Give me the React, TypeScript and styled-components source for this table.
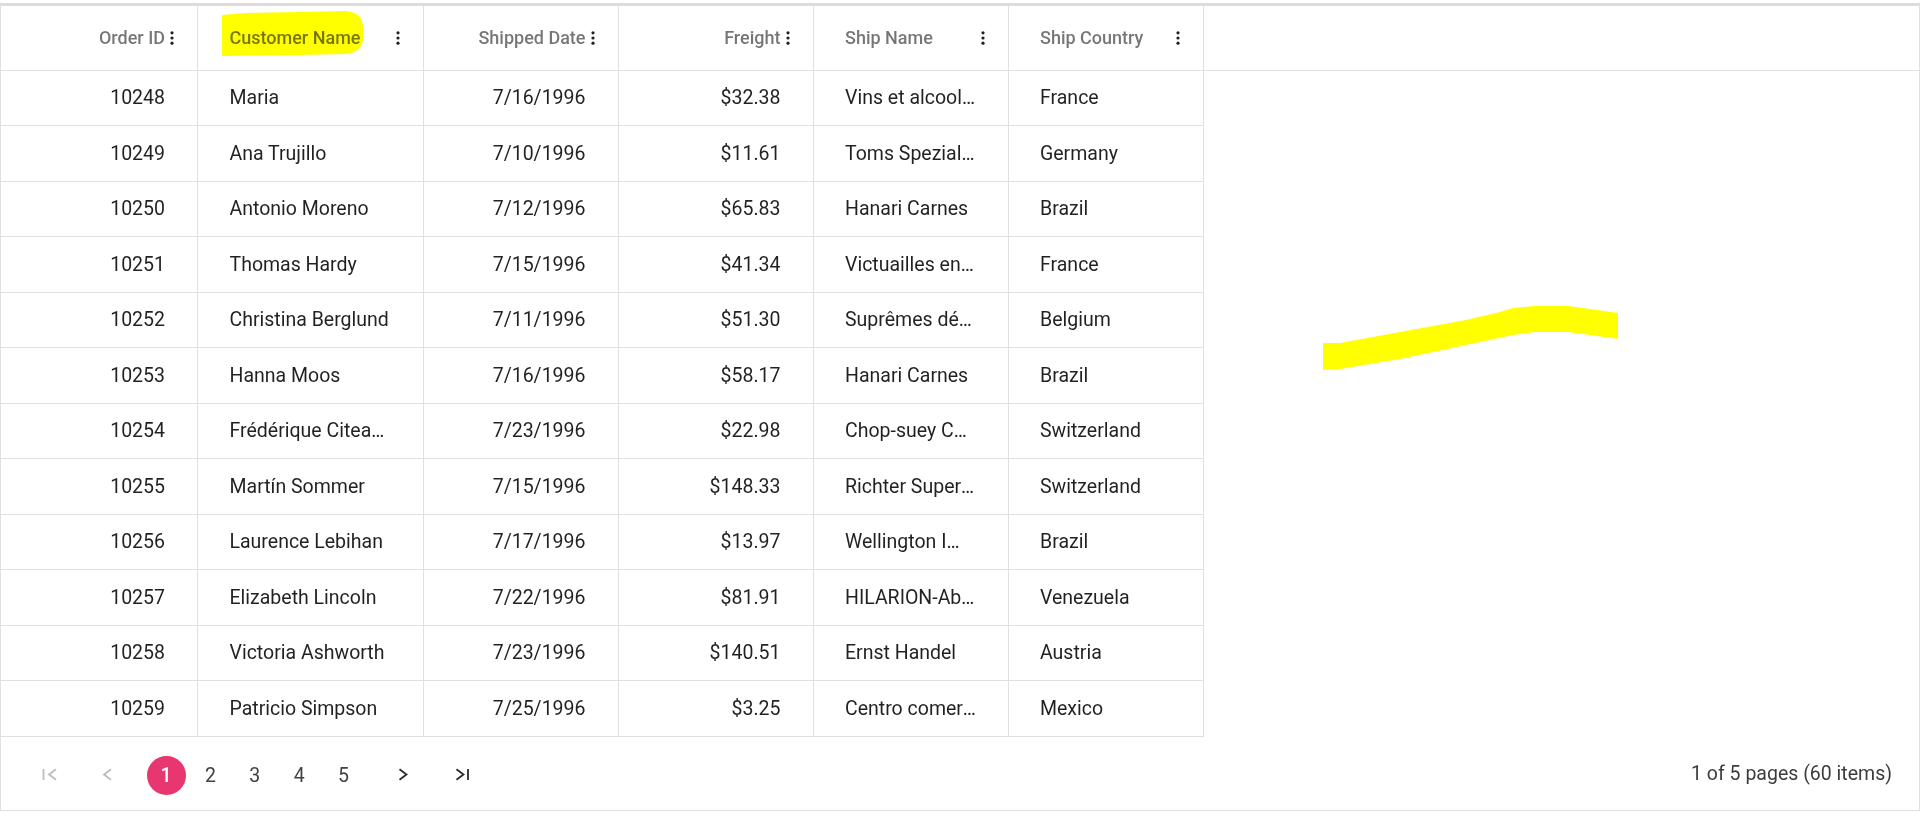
import React from "react";
import styled, { createGlobalStyle } from "styled-components";

type Align = "left" | "right";

interface Column {
  key: keyof Order;
  title: string;
  width: string;
  align: Align;
}

interface Order {
  id: string;
  customer: string;
  shipped: string;
  freight: string;
  shipName: string;
  country: string;
}

const columns: Column[] = [
  { key: "id", title: "Order ID", width: "197px", align: "right" },
  { key: "customer", title: "Customer Name", width: "226px", align: "left" },
  { key: "shipped", title: "Shipped Date", width: "194.5px", align: "right" },
  { key: "freight", title: "Freight", width: "195px", align: "right" },
  { key: "shipName", title: "Ship Name", width: "195px", align: "left" },
  { key: "country", title: "Ship Country", width: "195.5px", align: "left" },
];

const orders: Order[] = [
  { id: "10248", customer: "Maria", shipped: "7/16/1996", freight: "$32.38", shipName: "Vins et alcools Chevalier", country: "France" },
  { id: "10249", customer: "Ana Trujillo", shipped: "7/10/1996", freight: "$11.61", shipName: "Toms Spezialitäten", country: "Germany" },
  { id: "10250", customer: "Antonio Moreno", shipped: "7/12/1996", freight: "$65.83", shipName: "Hanari Carnes", country: "Brazil" },
  { id: "10251", customer: "Thomas Hardy", shipped: "7/15/1996", freight: "$41.34", shipName: "Victuailles en stock", country: "France" },
  { id: "10252", customer: "Christina Berglund", shipped: "7/11/1996", freight: "$51.30", shipName: "Suprêmes délices", country: "Belgium" },
  { id: "10253", customer: "Hanna Moos", shipped: "7/16/1996", freight: "$58.17", shipName: "Hanari Carnes", country: "Brazil" },
  { id: "10254", customer: "Frédérique Citeaux", shipped: "7/23/1996", freight: "$22.98", shipName: "Chop-suey Chinese", country: "Switzerland" },
  { id: "10255", customer: "Martín Sommer", shipped: "7/15/1996", freight: "$148.33", shipName: "Richter Supermarkt", country: "Switzerland" },
  { id: "10256", customer: "Laurence Lebihan", shipped: "7/17/1996", freight: "$13.97", shipName: "Wellington Importadora", country: "Brazil" },
  { id: "10257", customer: "Elizabeth Lincoln", shipped: "7/22/1996", freight: "$81.91", shipName: "HILARION-Abastos", country: "Venezuela" },
  { id: "10258", customer: "Victoria Ashworth", shipped: "7/23/1996", freight: "$140.51", shipName: "Ernst Handel", country: "Austria" },
  { id: "10259", customer: "Patricio Simpson", shipped: "7/25/1996", freight: "$3.25", shipName: "Centro comercial Moctezuma", country: "Mexico" },
];

const template = columns.map((c) => c.width).join(" ");

const GlobalStyle = createGlobalStyle`
  html, body {
    margin: 0;
    background: #fff;
  }
  body {
    font-family: Roboto, "Liberation Sans", sans-serif;
  }
  * {
    box-sizing: border-box;
  }
`;

const Page = styled.div`
  position: relative;
  width: 1920px;
  height: 817px;
  padding-top: 3px;
  overflow: hidden;
`;

const Grid = styled.div`
  width: 1920px;
  border: 1px solid #e0e0e0;
  border-top: 3px solid #dcdcdc;
  display: flex;
  flex-direction: column;
`;

const HeaderRow = styled.div`
  display: grid;
  grid-template-columns: ${template} 1fr;
  height: 64.5px;
  border-bottom: 1px solid #e0e0e0;
`;

const HeaderCell = styled.div<{ $align: Align }>`
  display: flex;
  align-items: center;
  justify-content: ${(p) => (p.$align === "right" ? "flex-end" : "space-between")};
  gap: 3px;
  padding: 0 21px 0 31.5px;
  border-right: 1px solid #e0e0e0;
  font-size: 18px;
  font-weight: 500;
  color: rgba(0, 0, 0, 0.54);
  white-space: nowrap;
`;

const HeaderFiller = styled.div``;

const Kebab = styled.svg`
  flex: none;
  width: 8px;
  height: 16px;
  fill: #1f1f1f;
`;

const Body = styled.div`
  display: flex;
`;

const Rows = styled.div`
  display: flex;
  flex-direction: column;
`;

const Row = styled.div`
  display: grid;
  grid-template-columns: ${template};
  height: 55.5px;
  border-bottom: 1px solid #e0e0e0;
`;

const Cell = styled.div<{ $align: Align }>`
  display: flex;
  align-items: center;
  justify-content: ${(p) => (p.$align === "right" ? "flex-end" : "flex-start")};
  padding: ${(p) => (p.$align === "right" ? "0 32px 0 21px" : "0 31.5px")};
  border-right: 1px solid #e0e0e0;
  font-size: 19.5px;
  color: rgba(0, 0, 0, 0.87);
  min-width: 0;
`;

const CellText = styled.span`
  overflow: hidden;
  text-overflow: ellipsis;
  white-space: nowrap;
`;

const Pager = styled.div`
  display: flex;
  align-items: center;
  justify-content: space-between;
  height: 73px;
  padding: 0 27px 0 27.5px;
`;

const PagerNav = styled.div`
  display: flex;
  align-items: center;
  gap: 20px;
  padding-top: 5px;
`;

const NavGroup = styled.div`
  display: flex;
  gap: 20px;
`;

const Numbers = styled.div`
  display: flex;
  gap: 5.4px;
`;

const NavButton = styled.svg<{ $disabled?: boolean }>`
  width: 39px;
  height: 39px;
  fill: none;
  stroke: ${(p) => (p.$disabled ? "#bdbdbd" : "#2b2b2b")};
  stroke-width: 1.8;
`;

const PageNumber = styled.div<{ $active?: boolean }>`
  width: 39px;
  height: 39px;
  border-radius: 50%;
  display: flex;
  align-items: center;
  justify-content: center;
  font-size: 19.5px;
  font-weight: ${(p) => (p.$active ? 500 : 400)};
  color: ${(p) => (p.$active ? "#fff" : "#424242")};
  background: ${(p) => (p.$active ? "#e73670" : "transparent")};
`;

const PagerInfo = styled.div`
  font-size: 19.5px;
  color: #3d3d3d;
`;

const Marker = styled.svg`
  position: absolute;
  left: 0;
  top: 0;
  width: 1920px;
  height: 817px;
  pointer-events: none;
  mix-blend-mode: multiply;
  fill: #ffff00;
`;

function KebabIcon() {
  return (
    <Kebab viewBox="0 0 8 16">
      <circle cx="4" cy="2.8" r="1.6" />
      <circle cx="4" cy="8" r="1.6" />
      <circle cx="4" cy="13.2" r="1.6" />
    </Kebab>
  );
}

export default function App() {
  return (
    <Page>
      <GlobalStyle />
      <Grid>
        <HeaderRow>
          {columns.map((c) => (
            <HeaderCell key={c.key} $align={c.align}>
              <span>{c.title}</span>
              <KebabIcon />
            </HeaderCell>
          ))}
          <HeaderFiller />
        </HeaderRow>
        <Body>
          <Rows>
            {orders.map((o) => (
              <Row key={o.id}>
                {columns.map((c) => (
                  <Cell key={c.key} $align={c.align}>
                    <CellText>{o[c.key]}</CellText>
                  </Cell>
                ))}
              </Row>
            ))}
          </Rows>
        </Body>
        <Pager>
          <PagerNav>
            <NavGroup>
              <NavButton $disabled viewBox="0 0 39 39">
                <path d="M14.5 13V24M27 13.2L20 18.5L27 23.8" />
              </NavButton>
              <NavButton $disabled viewBox="0 0 39 39">
                <path d="M23 13.2L16 18.5L23 23.8" />
              </NavButton>
            </NavGroup>
            <Numbers>
              {[1, 2, 3, 4, 5].map((n) => (
                <PageNumber key={n} $active={n === 1}>
                  {n}
                </PageNumber>
              ))}
            </Numbers>
            <NavGroup>
              <NavButton viewBox="0 0 39 39">
                <path d="M16.5 13.2L23.5 18.5L16.5 23.8" />
              </NavButton>
              <NavButton viewBox="0 0 39 39">
                <path d="M14.5 13.2L21.5 18.5L14.5 23.8M26 13V24" />
              </NavButton>
            </NavGroup>
          </PagerNav>
          <PagerInfo>1 of 5 pages (60 items)</PagerInfo>
        </Pager>
      </Grid>
      <Marker viewBox="0 0 1920 817">
        <path d="M222 15 L245 13 L300 12 L345 11 Q362 12 363 26 L363 40 Q361 53 345 54 L300 55 L222 56 Z" />
        <path d="M1323 343 L1340 343 L1400 332 L1466 320 L1500 312 L1513 308 L1535 306 L1568 306 L1590 309 L1618 313 L1618 339 L1590 335 L1568 332 L1535 332 L1513 335 L1466 345 L1400 359 L1340 369 L1323 370 Z" />
      </Marker>
    </Page>
  );
}
